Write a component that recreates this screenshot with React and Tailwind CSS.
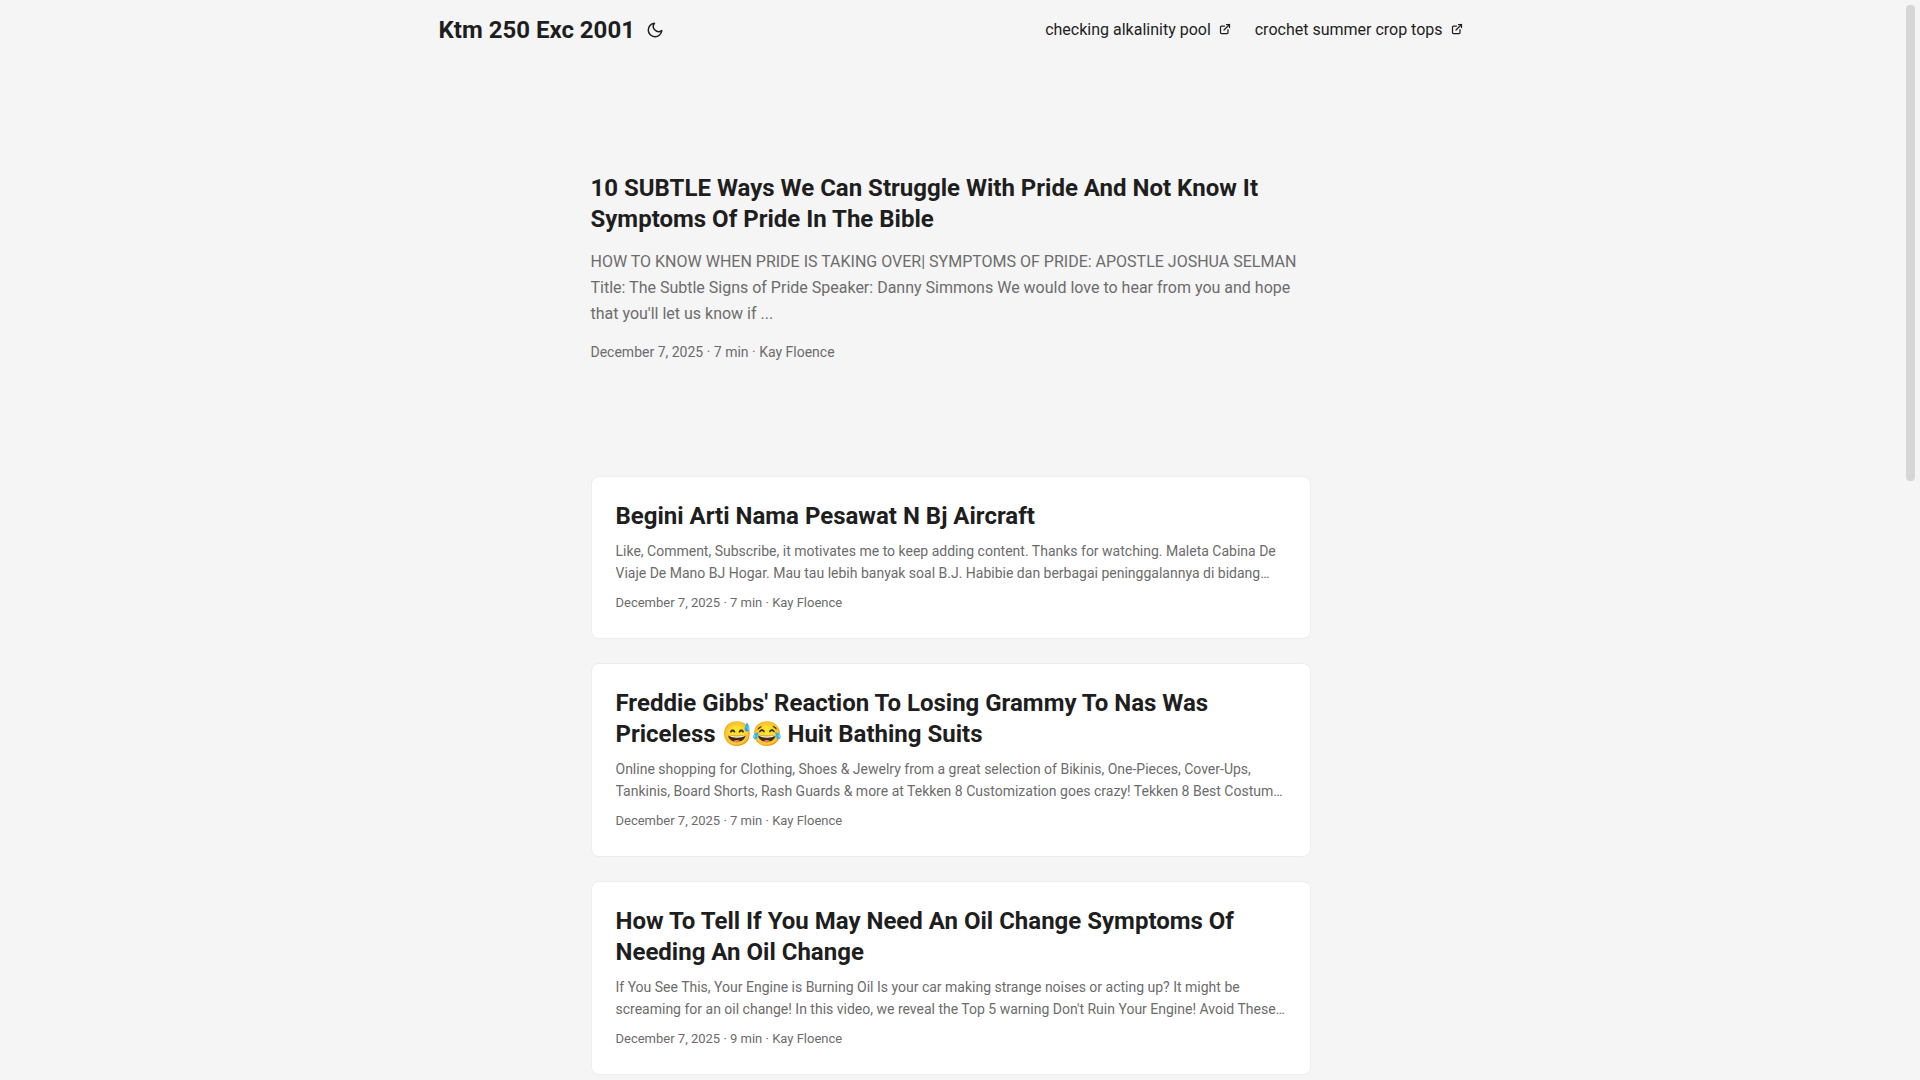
import React from 'react';

const menu = ['checking alkalinity pool', 'crochet summer crop tops'];

const posts = [
    {
        title: 'Begini Arti Nama Pesawat N Bj Aircraft',
        summary:
            'Like, Comment, Subscribe, it motivates me to keep adding content. Thanks for watching. Maleta Cabina De Viaje De Mano BJ Hogar. Mau tau lebih banyak soal B.J. Habibie dan berbagai peninggalannya di bidang…',
        minutes: 7,
    },
    {
        title: "Freddie Gibbs' Reaction To Losing Grammy To Nas Was Priceless 😅😂 Huit Bathing Suits",
        summary:
            'Online shopping for Clothing, Shoes & Jewelry from a great selection of Bikinis, One-Pieces, Cover-Ups, Tankinis, Board Shorts, Rash Guards & more at Tekken 8 Customization goes crazy! Tekken 8 Best Costum…',
        minutes: 7,
    },
    {
        title: 'How To Tell If You May Need An Oil Change Symptoms Of Needing An Oil Change',
        summary:
            "If You See This, Your Engine is Burning Oil Is your car making strange noises or acting up? It might be screaming for an oil change! In this video, we reveal the Top 5 warning Don't Ruin Your Engine! Avoid These…",
        minutes: 9,
    },
];

const MoonIcon = () => (
    <svg width="24" height="18" viewBox="0 0 24 24" fill="none" stroke="currentColor" strokeWidth="2" strokeLinecap="round" strokeLinejoin="round">
        <path d="M21 12.79A9 9 0 1 1 11.21 3 7 7 0 0 0 21 12.79z" />
    </svg>
);

const ExternalIcon = () => (
    <svg className="inline align-baseline" width="12" height="12" viewBox="0 0 24 24" fill="none" stroke="currentColor" strokeWidth="2.5" strokeLinecap="round" strokeLinejoin="round" shapeRendering="geometricPrecision">
        <path d="M18 13v6a2 2 0 01-2 2H5a2 2 0 01-2-2V8a2 2 0 012-2h6" />
        <path d="M15 3h6v6" />
        <path d="M10 14L21 3" />
    </svg>
);

const Header = () => (
    <header>
        <nav className="mx-auto flex max-w-[1072px] flex-wrap justify-between px-6 leading-[60px]">
            <div className="flex items-center">
                <a href="#" className="text-2xl/[60px] font-bold">Ktm 250 Exc 2001</a>
                <button type="button" aria-label="Toggle theme" className="ml-2">
                    <MoonIcon />
                </button>
            </div>
            <ul className="flex gap-6">
                {menu.map((name) => (
                    <li key={name}>
                        <a href="#" className="whitespace-nowrap">
                            {name}&nbsp;&nbsp;<ExternalIcon />
                        </a>
                    </li>
                ))}
            </ul>
        </nav>
    </header>
);

const FirstEntry = () => (
    <article className="mt-6 mb-12 flex min-h-80 flex-col justify-center">
        <h1 className="text-2xl/[31px] font-bold">
            10 SUBTLE Ways We Can Struggle With Pride And Not Know It Symptoms Of Pride In The Bible
        </h1>
        <p className="my-3.5 text-base/[26px] text-[#6c6c6c]">
            HOW TO KNOW WHEN PRIDE IS TAKING OVER| SYMPTOMS OF PRIDE: APOSTLE JOSHUA SELMAN Title: The Subtle Signs of
            Pride Speaker: Danny Simmons We would love to hear from you and hope that you'll let us know if ...
        </p>
        <footer className="text-sm/[22px] text-[#6c6c6c]">December 7, 2025 · 7 min · Kay Floence</footer>
    </article>
);

const PostEntry = ({ title, summary, minutes }) => (
    <article className="mb-6 rounded-lg border border-[#eeeeee] bg-white p-6">
        <h2 className="text-2xl/[31px] font-bold">{title}</h2>
        <p className="my-2 line-clamp-2 text-sm/[22px] text-[#6c6c6c]">{summary}</p>
        <footer className="text-[13px]/[22px] text-[#6c6c6c]">December 7, 2025 · {minutes} min · Kay Floence</footer>
    </article>
);

const App = () => {
    return (
        <div className="flex h-screen bg-[#f5f5f5] font-[Roboto,sans-serif] text-base text-[#1e1e1e]">
            <div className="min-w-0 flex-1 overflow-hidden">
                <Header />
                <main className="mx-auto max-w-[768px] p-6">
                    <FirstEntry />
                    {posts.map((post) => (
                        <PostEntry key={post.title} {...post} />
                    ))}
                </main>
            </div>
            {/* scroll track */}
            <div className="w-[19px] shrink-0 p-[5px]">
                <div className="h-[476px] rounded-sm bg-[#d6d6d6]" />
            </div>
        </div>
    );
};

export default App;
